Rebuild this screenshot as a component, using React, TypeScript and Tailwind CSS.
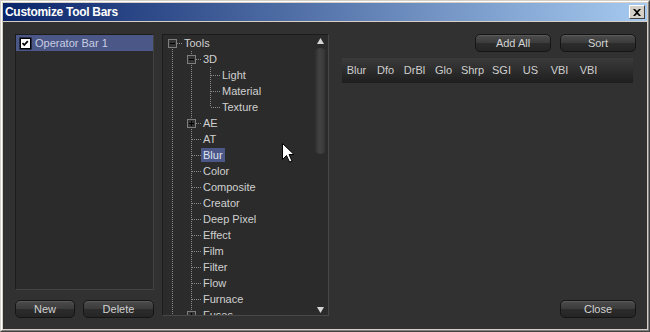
import type { ReactNode } from "react";

type Row = {
  label: string;
  guides: boolean[];
  first?: boolean;
  last?: boolean;
  box?: "minus" | "plus";
  selected?: boolean;
};

const treeRows: Row[] = [
  { label: "Tools", guides: [], first: true, box: "minus" },
  { label: "3D", guides: [true], box: "minus" },
  { label: "Light", guides: [true, true] },
  { label: "Material", guides: [true, true] },
  { label: "Texture", guides: [true, true], last: true },
  { label: "AE", guides: [true], box: "plus" },
  { label: "AT", guides: [true] },
  { label: "Blur", guides: [true], selected: true },
  { label: "Color", guides: [true] },
  { label: "Composite", guides: [true] },
  { label: "Creator", guides: [true] },
  { label: "Deep Pixel", guides: [true] },
  { label: "Effect", guides: [true] },
  { label: "Film", guides: [true] },
  { label: "Filter", guides: [true] },
  { label: "Flow", guides: [true] },
  { label: "Furnace", guides: [true] },
  { label: "Fuses", guides: [true], box: "plus" },
];

const toolbarItems = ["Blur", "Dfo", "DrBl", "Glo", "Shrp", "SGI", "US", "VBI", "VBI"];

const dot = { stroke: "#8a8a8a", strokeWidth: 1, strokeDasharray: "1 1" };

const Guide = ({ on }: { on: boolean }) => (
  <svg width="19" height="16" className="shrink-0">
    {on && <line x1="9.5" y1="0" x2="9.5" y2="16" {...dot} />}
  </svg>
);

const Connector = ({ row }: { row: Row }) => (
  <svg width="19" height="16" className="shrink-0">
    {!row.first && <line x1="9.5" y1="0" x2="9.5" y2="8" {...dot} />}
    {!row.last && <line x1="9.5" y1="8" x2="9.5" y2="16" {...dot} />}
    <line x1="10" y1="8.5" x2="19" y2="8.5" {...dot} />
    {row.box && (
      <>
        <rect x="5.5" y="4.5" width="8" height="8" fill="#333333" stroke="#7e7e7e" />
        <line x1="7" y1="8.5" x2="12" y2="8.5" stroke="#000" />
        {row.box === "plus" && <line x1="9.5" y1="6" x2="9.5" y2="11" stroke="#000" />}
      </>
    )}
  </svg>
);

const DarkButton = ({ children, className }: { children: ReactNode; className: string }) => (
  <button
    type="button"
    className={`h-[18px] rounded-[5px] border border-[#151515] bg-[linear-gradient(to_bottom,#4c4c4c_0%,#3c3c3c_48%,#2c2c2c_52%,#252525_100%)] text-[11px] leading-[16px] text-[#d2d2d2] shadow-[inset_0_1px_0_#5a5a5a] ${className}`}
  >
    {children}
  </button>
);

export default function App() {
  return (
    <div className="w-[650px] h-[332px] border border-t-[#d4d0c8] border-l-[#d4d0c8] border-r-[#404040] border-b-[#404040] font-['Liberation_Sans',Arial,sans-serif] select-none">
      <div className="h-full border border-t-white border-l-white border-r-[#808080] border-b-[#808080] bg-[#d4d0c8] p-[1px] flex flex-col">
        {/* Title bar */}
        <div className="h-[18px] shrink-0 flex items-center justify-between pl-[2px] pr-[2px] bg-[linear-gradient(to_right,#0a246a,#a6caf0)]">
          <span className="text-[12px] font-bold tracking-[-0.3px] text-white leading-none">Customize Tool Bars</span>
          <div className="w-[16px] h-[14px] bg-[#d4d0c8] border border-t-white border-l-white border-r-[#404040] border-b-[#404040] flex items-center justify-center">
            <svg width="8" height="7" viewBox="0 0 8 7">
              <path d="M0 0h2l2 2 2-2h2L5 3.5 8 7H6L4 5 2 7H0l3-3.5z" fill="#000" />
            </svg>
          </div>
        </div>

        {/* Body */}
        <div className="relative mt-[1px] flex-1 bg-[#313131] flex pt-[12px] pl-[12px] pr-[11px] pb-[11px] text-[11px] text-[#d0d0d0]">
          {/* Operator bars */}
          <div className="w-[139px] flex flex-col">
            <div className="h-[256px] border border-t-[#1c1c1c] border-l-[#1c1c1c] border-r-[#424242] border-b-[#424242] bg-[#2b2b2b]">
              <div className="h-[16px] flex items-center gap-[3px] bg-[#4a5787] pl-[3px]">
                <svg width="13" height="13" className="shrink-0">
                  <rect x="0.5" y="0.5" width="12" height="12" fill="#000" />
                  <rect x="2" y="2" width="9" height="9" fill="#fff" />
                  <path d="M3.5 6.2l1.8 1.8 3.5-3.8" fill="none" stroke="#000" strokeWidth="1.8" />
                </svg>
                <span className="text-[#c9cde0] leading-[16px]">Operator Bar 1</span>
              </div>
            </div>
            <div className="mt-auto flex gap-[8px]">
              <DarkButton className="w-[60px]">New</DarkButton>
              <DarkButton className="w-[71px]">Delete</DarkButton>
            </div>
          </div>

          {/* Tool tree */}
          <div className="ml-[8px] w-[167px] h-[282px] border border-t-[#1c1c1c] border-l-[#1c1c1c] border-r-[#484848] border-b-[#484848] bg-[#2b2b2b] flex overflow-hidden">
            <div className="flex-1 overflow-hidden">
              {treeRows.map((row) => (
                <div key={row.label} className="h-[16px] flex items-center">
                  {row.guides.map((g, i) => (
                    <Guide key={i} on={g} />
                  ))}
                  <Connector row={row} />
                  <span
                    className={`px-[2px] h-[14px] leading-[14px] whitespace-nowrap ${
                      row.selected ? "bg-[#4a5787] text-[#dfe2f0]" : ""
                    }`}
                  >
                    {row.label}
                  </span>
                </div>
              ))}
            </div>
            <div className="w-[15px] shrink-0 flex flex-col items-center pt-[3px] pb-[2px]">
              <svg width="7" height="6">
                <path d="M3.5 0L7 6H0z" fill="#d6d6d6" />
              </svg>
              <div className="mt-[4px] w-[13px] h-[106px] rounded-full bg-[linear-gradient(to_right,#2a2a2a,#424242_40%,#3c3c3c_70%,#262626)]" />
              <div className="flex-1" />
              <svg width="7" height="6">
                <path d="M0 0h7L3.5 6z" fill="#d6d6d6" />
              </svg>
            </div>
          </div>

          {/* Toolbar preview */}
          <div className="flex-1 flex flex-col items-end">
            <div className="flex gap-[9px]">
              <DarkButton className="w-[76px]">Add All</DarkButton>
              <DarkButton className="w-[76px]">Sort</DarkButton>
            </div>
            <div className="mt-[6px] mr-[3px] w-[291px] h-[25px] flex items-center bg-[linear-gradient(to_bottom,#3b3b3b,#1e1e1e)]">
              {toolbarItems.map((t, i) => (
                <span key={i} className="w-[29px] text-center text-[#cfcfcf]">
                  {t}
                </span>
              ))}
            </div>
            <div className="mt-auto">
              <DarkButton className="w-[76px]">Close</DarkButton>
            </div>
          </div>

          {/* Mouse pointer */}
          <svg width="13" height="20" className="absolute left-[279px] top-[121px] pointer-events-none">
            <path d="M0.5 0.5V16.5L4.5 12.5L7.5 19L10 18L7 11.5H12Z" fill="#fff" stroke="#000" />
          </svg>
        </div>
      </div>
    </div>
  );
}
